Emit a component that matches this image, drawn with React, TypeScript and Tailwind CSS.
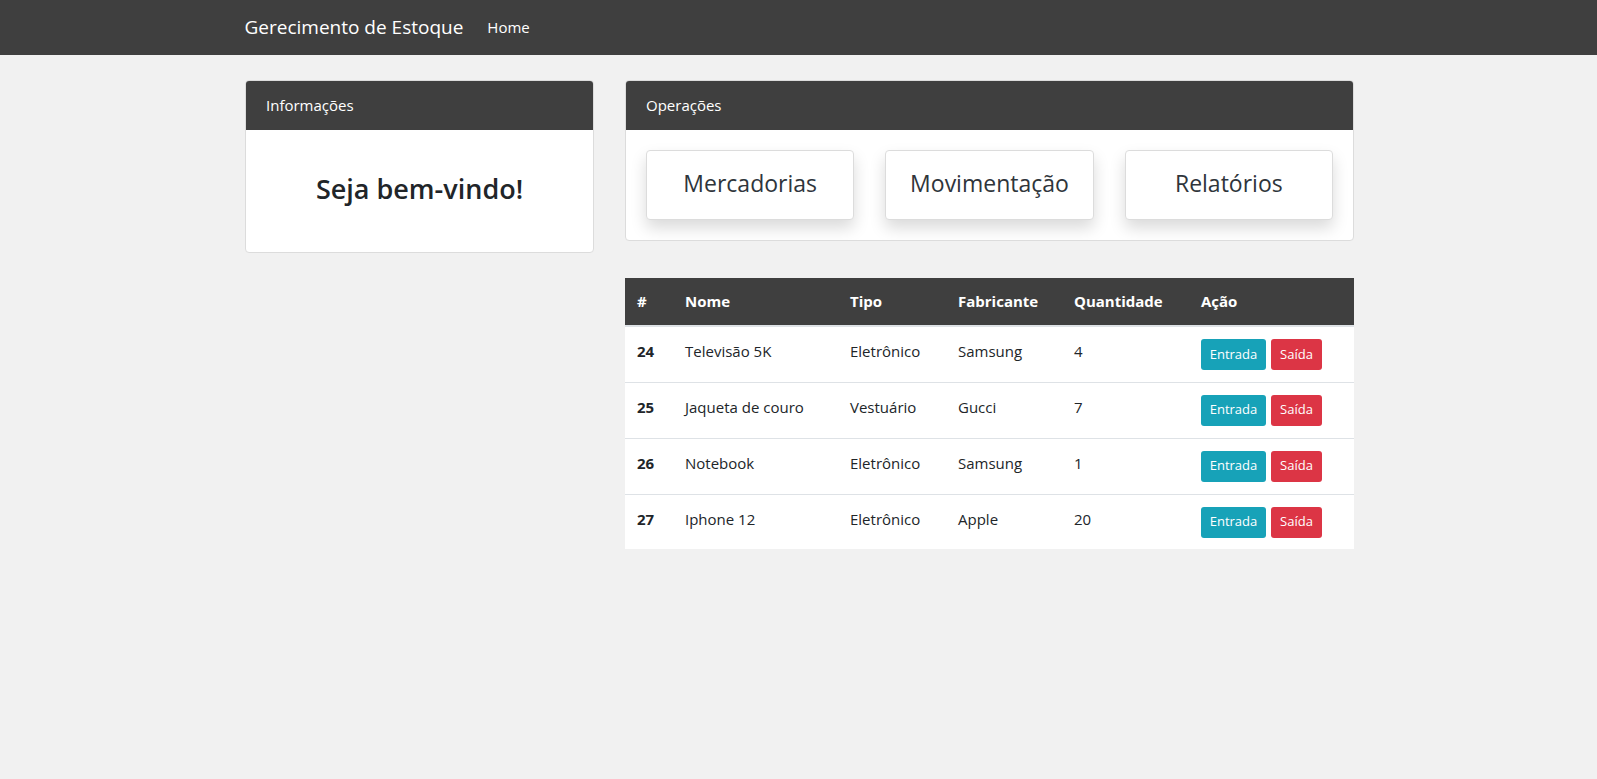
import React from 'react';

interface Mercadoria {
    id: number;
    nome: string;
    tipo: string;
    fabricante: string;
    quantidade: number;
}

const mercadorias: Mercadoria[] = [
    { id: 24, nome: 'Televisão 5K', tipo: 'Eletrônico', fabricante: 'Samsung', quantidade: 4 },
    { id: 25, nome: 'Jaqueta de couro', tipo: 'Vestuário', fabricante: 'Gucci', quantidade: 7 },
    { id: 26, nome: 'Notebook', tipo: 'Eletrônico', fabricante: 'Samsung', quantidade: 1 },
    { id: 27, nome: 'Iphone 12', tipo: 'Eletrônico', fabricante: 'Apple', quantidade: 20 },
];

const operacoes = ['Mercadorias', 'Movimentação', 'Relatórios'];

const App = () => {
    return (
        <div className="min-h-[779px] bg-[#f1f1f1] text-[#212529] font-['Open_Sans',sans-serif]">
            <nav className="bg-[#3f3f3f] h-[55px]">
                <div className="w-[1140px] mx-auto px-[16px] flex items-center h-full">
                    <a className="text-white text-[19px] mr-[24px]">Gerecimento de Estoque</a>
                    <a className="text-white text-[15px]">Home</a>
                </div>
            </nav>

            <div className="w-[1109px] ml-[245px] pt-[25px] flex gap-[31px]">
                <div className="w-[349px] shrink-0">
                    <div className="bg-white border border-[#dcdcdc] rounded-[4px] overflow-hidden">
                        <div className="bg-[#3f3f3f] text-white h-[49px] px-[20px] flex items-center text-[15px]">
                            Informações
                        </div>
                        <div className="h-[122px] flex items-center justify-center pb-[4px]">
                            <h3 className="text-[27px] font-semibold">Seja bem-vindo!</h3>
                        </div>
                    </div>
                </div>

                <div className="w-[729px] shrink-0">
                    <div className="bg-white border border-[#dcdcdc] rounded-[4px] overflow-hidden">
                        <div className="bg-[#3f3f3f] text-white h-[49px] px-[20px] flex items-center text-[15px]">
                            Operações
                        </div>
                        <div className="p-[20px] grid grid-cols-3 gap-[31px]">
                            {operacoes.map(op => (
                                <div key={op} className="h-[70px] bg-white border border-[#dcdcdc] rounded-[4px] shadow-[0_8px_16px_rgba(0,0,0,0.15)] flex items-center justify-center pb-[4px]">
                                    <span className="text-[23px] font-medium text-[#2f353b]">{op}</span>
                                </div>
                            ))}
                        </div>
                    </div>

                    <table className="mt-[37px] w-full table-fixed bg-white text-[15px] border-collapse">
                        <thead>
                            <tr className="bg-[#3f3f3f] text-white text-left h-[48px] border-b-2 border-[#dee2e6]">
                                <th className="w-[48px] px-[12px] font-bold">#</th>
                                <th className="w-[165px] px-[12px] font-bold">Nome</th>
                                <th className="w-[108px] px-[12px] font-bold">Tipo</th>
                                <th className="w-[116px] px-[12px] font-bold">Fabricante</th>
                                <th className="w-[127px] px-[12px] font-bold">Quantidade</th>
                                <th className="px-[12px] font-bold">Ação</th>
                            </tr>
                        </thead>
                        <tbody>
                            {mercadorias.map((m, i) => (
                                <tr key={m.id} className={i < mercadorias.length - 1 ? 'h-[56px] border-b border-[#dee2e6]' : 'h-[55px]'}>
                                    <th className="px-[12px] pt-[13px] align-top text-left font-bold">{m.id}</th>
                                    <td className="px-[12px] pt-[13px] align-top">{m.nome}</td>
                                    <td className="px-[12px] pt-[13px] align-top">{m.tipo}</td>
                                    <td className="px-[12px] pt-[13px] align-top">{m.fabricante}</td>
                                    <td className="px-[12px] pt-[13px] align-top">{m.quantidade}</td>
                                    <td className="px-[12px] pt-[12px] align-top">
                                        <div className="flex gap-[5px]">
                                            <button className="h-[31px] w-[65px] bg-[#17a2b8] text-white text-[13px] rounded-[3px]">Entrada</button>
                                            <button className="h-[31px] w-[51px] bg-[#dc3545] text-white text-[13px] rounded-[3px]">Saída</button>
                                        </div>
                                    </td>
                                </tr>
                            ))}
                        </tbody>
                    </table>
                </div>
            </div>
        </div>
    );
};

export default App;
